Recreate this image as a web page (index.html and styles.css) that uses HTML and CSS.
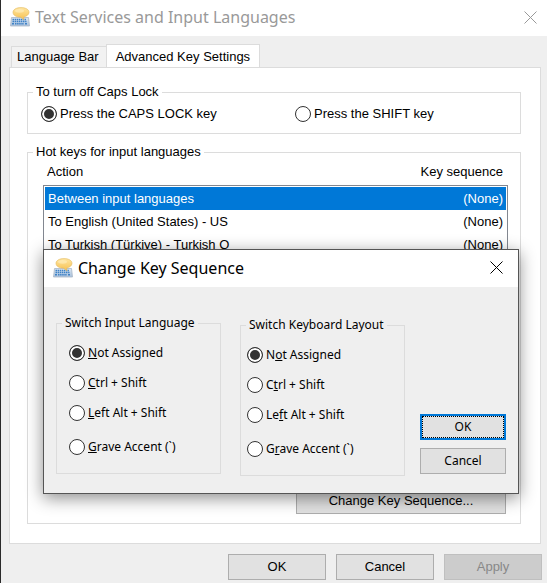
FILE: index.html
```html
<!DOCTYPE html>
<html lang="en">
<head>
<meta charset="utf-8">
<title>Text Services and Input Languages</title>
<link rel="stylesheet" href="styles.css">
</head>
<body>
<svg class="defs" aria-hidden="true">
  <defs>
    <linearGradient id="bubble" x1="0" y1="0" x2="0" y2="1">
      <stop offset="0" stop-color="#ffe6a0"/><stop offset="1" stop-color="#f6c050"/>
    </linearGradient>
    <linearGradient id="board" x1="0" y1="0" x2="0" y2="1">
      <stop offset="0" stop-color="#dbe7f4"/><stop offset="1" stop-color="#a9c1dc"/>
    </linearGradient>
    <symbol id="keyboard" viewBox="0 0 20 20">
      <path d="M1.500 10.500h17l1 8.500H.5z" fill="url(#board)" stroke="#a9b6c6" stroke-width=".8"/>
      <path d="M2.500 12.500h13.500M2.500 14.500h14M5 16.800h9" stroke="#3f82c6" stroke-width="1.500" stroke-dasharray="1.500 .6"/>
      <path d="M2 16.800h2M15 16.800h2" stroke="#3f82c6" stroke-width="1.400"/>
      <path d="M11 .6c4.600 0 8 1.900 8 4.700 0 2.500-2.500 4.200-5.300 4.700l.3 2.700-3.500-2.500C6 10.100 3 8.200 3 5.300 3 2.500 6.400.6 11 .6z" fill="url(#bubble)" stroke="#e2b860" stroke-width=".6"/>
      <ellipse cx="9.500" cy="3.800" rx="4.500" ry="1.900" fill="#fff4cc" opacity=".5"/>
    </symbol>
    <symbol id="close" viewBox="0 0 13 13">
      <path d="M.5.5l12 12M12.500.5l-12 12" fill="none" stroke="currentColor" stroke-width="1"/>
    </symbol>
  </defs>
</svg>

<main class="window">
  <header class="titlebar titlebar-inactive">
    <svg class="app-icon" aria-hidden="true"><use href="#keyboard"/></svg>
    <h1 class="title">Text Services and Input Languages</h1>
    <button class="close" type="button" aria-label="Close"><svg class="close-icon"><use href="#close"/></svg></button>
  </header>

  <div class="content">
    <div class="tabs" role="tablist">
      <button class="tab" type="button" role="tab" aria-selected="false">Language Bar</button>
      <button class="tab tab-selected" type="button" role="tab" aria-selected="true">Advanced Key Settings</button>
    </div>

    <section class="panel">
      <fieldset class="group">
        <legend>To turn off Caps Lock</legend>
        <div class="caps-options">
          <label class="option"><input type="radio" name="caps" checked>Press the CAPS LOCK key</label>
          <label class="option"><input type="radio" name="caps">Press the SHIFT key</label>
        </div>
      </fieldset>

      <fieldset class="group">
        <legend>Hot keys for input languages</legend>
        <div class="hotkey-area">
          <table class="hotkeys">
            <thead>
              <tr><th>Action</th><th>Key sequence</th></tr>
            </thead>
            <tbody>
              <tr class="selected"><td>Between input languages</td><td>(None)</td></tr>
              <tr><td>To English (United States) - US</td><td>(None)</td></tr>
              <tr><td>To Turkish (Türkiye) - Turkish Q</td><td>(None)</td></tr>
            </tbody>
          </table>
          <button class="button change-button" type="button">Change Key Sequence...</button>
        </div>
      </fieldset>
    </section>

    <footer class="footer">
      <button class="button" type="button">OK</button>
      <button class="button" type="button">Cancel</button>
      <button class="button" type="button" disabled>Apply</button>
    </footer>
  </div>
</main>

<div class="dialog" role="dialog" aria-labelledby="dialog-title">
  <header class="titlebar">
    <svg class="app-icon" aria-hidden="true"><use href="#keyboard"/></svg>
    <h2 class="title" id="dialog-title">Change Key Sequence</h2>
    <button class="close" type="button" aria-label="Close"><svg class="close-icon"><use href="#close"/></svg></button>
  </header>
  <div class="dialog-body">
    <div class="dialog-groups">
      <fieldset class="group switch-group">
        <legend>Switch Input Language</legend>
        <label class="option"><input type="radio" name="lang" checked><span><u>N</u>ot Assigned</span></label>
        <label class="option"><input type="radio" name="lang"><span><u>C</u>trl + Shift</span></label>
        <label class="option"><input type="radio" name="lang"><span><u>L</u>eft Alt + Shift</span></label>
        <label class="option"><input type="radio" name="lang"><span><u>G</u>rave Accent (`)</span></label>
      </fieldset>
      <fieldset class="group switch-group layout-group">
        <legend>Switch Keyboard Layout</legend>
        <label class="option"><input type="radio" name="layout" checked><span>N<u>o</u>t Assigned</span></label>
        <label class="option"><input type="radio" name="layout"><span>C<u>t</u>rl + Shift</span></label>
        <label class="option"><input type="radio" name="layout"><span>Le<u>f</u>t Alt + Shift</span></label>
        <label class="option"><input type="radio" name="layout"><span>G<u>r</u>ave Accent (`)</span></label>
      </fieldset>
    </div>
    <div class="dialog-actions">
      <button class="button button-default" type="button">OK</button>
      <button class="button" type="button">Cancel</button>
    </div>
  </div>
</div>
</body>
</html>
```
FILE: styles.css
```css
* {
  box-sizing: border-box;
}

body {
  margin: 0;
  position: relative;
  font: 13px/16px "Liberation Sans", Arial, sans-serif;
  color: #000;
  background: #efefef;
}

button {
  font: inherit;
  color: inherit;
}

.defs {
  position: absolute;
  width: 0;
  height: 0;
}

.window {
  display: flex;
  flex-direction: column;
  min-height: 100vh;
  border-left: 1px solid #2b2b2b;
}

/* Title bars */
.titlebar {
  display: flex;
  align-items: center;
  height: 36px;
  padding: 0 10px 2px 9px;
  background: #fff;
}

.titlebar-inactive {
  color: #999;
}

.app-icon {
  width: 20px;
  height: 20px;
  margin-right: 5px;
}

.title {
  flex: 1;
  margin: 0;
  font: 16px/24px "Noto Sans", "Open Sans", sans-serif;
  white-space: nowrap;
}

.close {
  display: flex;
  padding: 0;
  border: 0;
  background: none;
}

.close-icon {
  width: 13px;
  height: 13px;
}

/* Tabs and panel */
.content {
  flex: 1;
  display: flex;
  flex-direction: column;
  padding: 8px 6px 3px 8px;
}

.tabs {
  display: flex;
  align-items: flex-end;
  height: 24px;
  margin: 0 0 -1px 2px;
}

.tab {
  height: 22px;
  padding: 0 7px 0 5px;
  border: 1px solid #dcdcdc;
  border-width: 1px 0 1px 1px;
  background: #f2f2f2;
  white-space: nowrap;
}

.tab-selected {
  height: 24px;
  padding: 0 9px;
  border-width: 1px 1px 0;
  background: #fff;
}

.panel {
  flex: 1;
  display: flex;
  flex-direction: column;
  gap: 10px;
  padding: 16px 19px 19px 17px;
  border: 1px solid #dcdcdc;
  background: #fff;
}

/* Group boxes */
.group {
  min-width: 0;
  margin: 0;
  padding: 0;
  border: 1px solid #dcdcdc;
}

.group legend {
  margin-left: 5px;
  padding: 0 3px;
  white-space: nowrap;
}

.caps-options {
  display: grid;
  grid-template-columns: 254px 1fr;
  padding: 6px 13px 11px;
}

.hotkey-area {
  display: flex;
  flex-direction: column;
  min-height: 363px;
  padding: 0 14px 9px 17px;
}

.option {
  display: flex;
  align-items: center;
  gap: 3px;
  white-space: nowrap;
}

.option input {
  appearance: none;
  flex: none;
  width: 16px;
  height: 16px;
  margin: 0;
  border: 1px solid #333;
  border-radius: 50%;
  background: #fff;
}

.option input:checked {
  background: #333;
  box-shadow: inset 0 0 0 2px #fff;
}

/* Hot key list */
.hotkeys {
  width: 100%;
  border-spacing: 0;
}

.hotkeys th {
  height: 27px;
  padding: 0 3px 4px 2px;
  font-weight: normal;
  text-align: left;
}

.hotkeys td {
  height: 23px;
  padding: 0 3px;
}

.hotkeys th:last-child,
.hotkeys td:last-child {
  text-align: right;
}

.hotkeys tbody {
  outline: 1px solid #828790;
  outline-offset: 1px;
}

.selected {
  color: #fff;
  background: #0078d7;
}

/* Buttons */
.button {
  height: 26px;
  padding: 0;
  border: 1px solid #adadad;
  background: #e1e1e1;
}

.button:disabled {
  color: #888;
  border-color: #bfbfbf;
  background: #ccc;
}

.change-button {
  align-self: flex-end;
  width: 210px;
  margin-top: auto;
}

.footer {
  display: flex;
  justify-content: flex-end;
  gap: 10px;
  margin: 10px -1px 0 0;
}

.footer .button {
  width: 98px;
}

/* Dialog over the settings window */
.dialog {
  position: absolute;
  top: 249px;
  left: 43px;
  right: 28px;
  border: 1px solid #555;
  background: #efefef;
  box-shadow: 0 4px 16px rgba(0, 0, 0, 0.45);
  font: 12px/16px "Noto Sans", Tahoma, sans-serif;
}

.dialog .titlebar {
  height: 37px;
  padding-right: 15px;
}

.dialog-body {
  display: flex;
  gap: 15px;
  padding: 28px 12px 17px;
}

.dialog-groups {
  flex: 1;
  display: flex;
  align-items: flex-start;
  gap: 19px;
}

.switch-group {
  flex: 1;
  display: grid;
  gap: 14px;
  padding: 14px 0 18px;
}

.switch-group .option {
  padding-left: 12px;
}

.switch-group .option:last-child {
  margin-top: 4px;
}

.layout-group {
  margin-top: 2px;
}

.layout-group .option {
  padding-left: 6px;
}

.dialog-actions {
  align-self: flex-end;
  display: grid;
  gap: 8px;
  width: 86px;
  margin-bottom: 2px;
}

.button-default {
  border: 2px solid #0078d7;
  outline: 1px dotted #000;
  outline-offset: -3px;
}
```
